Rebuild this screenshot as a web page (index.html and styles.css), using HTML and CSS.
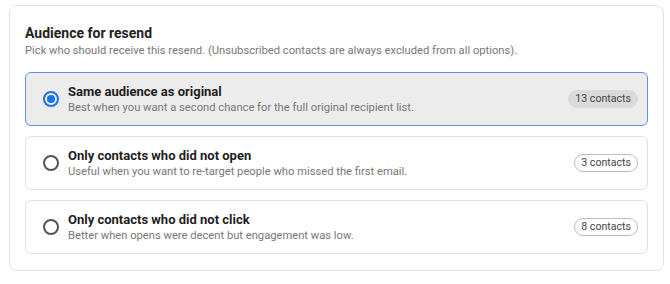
FILE: index.html
```html
<!DOCTYPE html>
<html>
<head>
<meta charset="utf-8">
<link rel="stylesheet" href="styles.css">
</head>
<body>
<section class="card">
  <h2 class="title">Audience for resend</h2>
  <p class="subtitle">Pick who should receive this resend. (Unsubscribed contacts are always excluded from all options).</p>
  <div class="options">
    <div class="option selected">
      <span class="radio checked"></span>
      <div class="text">
        <div class="opt-title">Same audience as original</div>
        <div class="opt-desc">Best when you want a second chance for the full original recipient list.</div>
      </div>
      <span class="badge">13 contacts</span>
    </div>
    <div class="option">
      <span class="radio"></span>
      <div class="text">
        <div class="opt-title">Only contacts who did not open</div>
        <div class="opt-desc">Useful when you want to re-target people who missed the first email.</div>
      </div>
      <span class="badge">3 contacts</span>
    </div>
    <div class="option">
      <span class="radio"></span>
      <div class="text">
        <div class="opt-title">Only contacts who did not click</div>
        <div class="opt-desc">Better when opens were decent but engagement was low.</div>
      </div>
      <span class="badge">8 contacts</span>
    </div>
  </div>
</section>
</body>
</html>
```

FILE: styles.css
```css
* { box-sizing: border-box; }
html, body { margin: 0; background: #ffffff; }
body {
  padding: 5px 0 0 9px;
  font-family: Roboto, "Liberation Sans", Arial, sans-serif;
  color: #1f1f1f;
}
.card {
  width: 655px;
  border: 1px solid #e4e4e4;
  border-radius: 8px;
  padding: 17px 15px 16px 15px;
  background: #fff;
}
.title {
  margin: 0;
  font-size: 14px;
  line-height: 20px;
  font-weight: 700;
  color: #222;
}
.subtitle {
  margin: 0;
  font-size: 11.2px;
  line-height: 16px;
  color: #777;
}
.options {
  margin-top: 13px;
  display: flex;
  flex-direction: column;
  gap: 10px;
}
.option {
  height: 54px;
  display: flex;
  align-items: center;
  padding: 0 9px 0 17px;
  border: 1px solid #e2e2e2;
  border-radius: 6px;
  background: #fff;
}
.option.selected {
  background: #ececec;
  border-color: #5b93e6;
}
.radio {
  flex: none;
  width: 16px;
  height: 16px;
  border-radius: 50%;
  border: 2px solid #555;
  margin-right: 9px;
  display: flex;
  align-items: center;
  justify-content: center;
}
.radio.checked {
  border-color: #1a73e8;
}
.radio.checked::after {
  content: "";
  width: 8px;
  height: 8px;
  border-radius: 50%;
  background: #1a73e8;
}
.text {
  flex: 1;
  min-width: 0;
}
.opt-title {
  font-size: 13px;
  line-height: 17px;
  font-weight: 700;
  color: #1f1f1f;
}
.opt-desc {
  font-size: 11.2px;
  line-height: 15px;
  color: #777;
}
.badge {
  flex: none;
  height: 18px;
  line-height: 16px;
  padding: 0 6px;
  border-radius: 9px;
  border: 1px solid #bdbdbd;
  font-size: 10.6px;
  color: #444;
  background: #fff;
}
.option.selected .badge {
  background: #dadada;
  border-color: #dadada;
}
```
